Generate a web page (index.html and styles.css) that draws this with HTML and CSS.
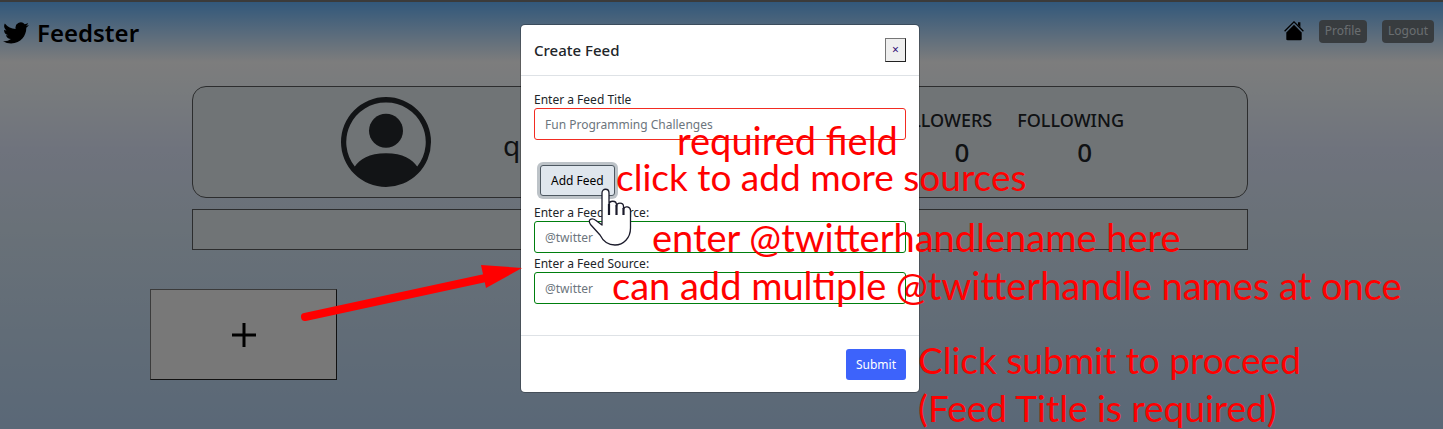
FILE: index.html
```html
<!DOCTYPE html>
<html lang="en">
<head>
<meta charset="utf-8">
<title>Feedster</title>
<link rel="stylesheet" href="styles.css">
</head>
<body>
<div class="page">
  <header class="topbar">
    <a class="brand" href="#">
      <svg class="brand-icon" viewBox="0 0 24 24" aria-hidden="true"><path d="M23.9 4.6a10 10 0 0 1-2.8.8 5 5 0 0 0 2.1-2.7c-1 .6-2 1-3.1 1.2a4.9 4.9 0 0 0-8.4 4.5A14 14 0 0 1 1.7 3.2a4.9 4.9 0 0 0 1.5 6.5 4.9 4.9 0 0 1-2.2-.6v.1a4.9 4.9 0 0 0 3.9 4.8 5 5 0 0 1-2.2.1 4.9 4.9 0 0 0 4.6 3.4A9.9 9.9 0 0 1 0 19.500a14 14 0 0 0 7.500 2.200c9.100 0 14-7.500 14-14v-.6a10 10 0 0 0 2.400-2.500z"/></svg>
      Feedster
    </a>
    <nav class="nav">
      <a class="home" href="#" aria-label="Home"><svg viewBox="0 0 20 20" aria-hidden="true"><path d="M10 3.800 2.300 11.500V18c0 .8.400 1.200 1.200 1.200h13c.8 0 1.200-.4 1.200-1.200v-6.500z"/><path d="M.6 10.200 10 .9l9.400 9.300" fill="none" stroke="#000" stroke-width="1.300"/><path d="M14 1.300h2.400v5L14 4z"/></svg></a>
      <button class="nav-btn" type="button">Profile</button>
      <button class="nav-btn" type="button">Logout</button>
    </nav>
  </header>
  <main class="main">
    <section class="profile">
      <svg class="avatar" viewBox="0 0 90 90" aria-hidden="true"><path fill-rule="evenodd" d="M45 0a45 45 0 1 0 0 90 45 45 0 0 0 0-90zM45 5.600a39.400 39.400 0 0 1 31.200 63.900C71.500 62.500 62 56.200 45 56.200S18.500 62.500 13.800 69.500A39.400 39.400 0 0 1 45 5.600z"/><circle cx="45" cy="33.800" r="17"/></svg>
      <span class="username">q</span>
      <dl class="stats">
        <div class="stat"><dt>FOLLOWERS</dt><dd>0</dd></div>
        <div class="stat"><dt>FOLLOWING</dt><dd>0</dd></div>
      </dl>
    </section>
    <div class="strip"></div>
  </main>
  <button class="tile" type="button" aria-label="New feed"><svg viewBox="0 0 24 24" aria-hidden="true"><path d="M12 0v24M0 12h24" stroke="#000" stroke-width="3"/></svg></button>
</div>

<div class="backdrop">
  <form class="modal" role="dialog" aria-labelledby="modal-title">
    <header class="modal-head">
      <h1 id="modal-title">Create Feed</h1>
      <button class="close" type="button" aria-label="Close">×</button>
    </header>
    <div class="modal-body">
      <label for="title">Enter a Feed Title</label>
      <input class="field field-required" id="title" type="text" placeholder="Fun Programming Challenges">
      <button class="add" type="button">Add Feed</button>
      <label for="source1">Enter a Feed Source:</label>
      <input class="field" id="source1" type="text" placeholder="@twitter">
      <label for="source2">Enter a Feed Source:</label>
      <input class="field" id="source2" type="text" placeholder="@twitter">
    </div>
    <footer class="modal-foot"><button class="submit" type="submit">Submit</button></footer>

    <svg class="pointer" viewBox="0 0 44 58" aria-hidden="true"><path d="M14 37V5c0-5 7-5 7 0v12c0-5 7.500-5 7.500 0v1.500c0-4.500 7-4.500 7 0V21c1-3.500 7-2.500 7 1.500V40c0 10-7 17-15.500 17-7 0-12-4-15-10L2.500 36.500C-1 31 4 29.500 8 32.500z" fill="#fff" stroke="#1b1b2b" stroke-width="1.300" stroke-linejoin="round"/><path d="M21 16v11M28.500 17v10M35.500 20v7" stroke="#1b1b2b" stroke-width="2.200"/></svg>
    <svg class="arrow" viewBox="0 0 222 60" aria-hidden="true"><path d="M5 54 190 14" stroke="red" stroke-width="8" stroke-linecap="round"/><path d="m181 2 41 3-36 20z" fill="red"/></svg>
    <p class="note note-required">required field</p>
    <p class="note note-add">click to add more sources</p>
    <p class="note note-handle">enter @twitterhandlename here</p>
    <p class="note note-multiple">can add multiple @twitterhandle names at once</p>
    <p class="note note-submit">Click submit to proceed<br>(Feed Title is required)</p>
  </form>
</div>
</body>
</html>
```
FILE: styles.css
```css
* { box-sizing: border-box; }
html { height: 100%; overflow: hidden; }
body {
  margin: 0;
  min-height: 100%;
  font: 12px/18px "Noto Sans", "Open Sans", sans-serif;
  color: #212529;
  position: relative;
}
button, input { font: inherit; color: inherit; }
h1, p, dl, dd { margin: 0; }

.page {
  min-height: 100vh;
  padding-right: 3px;
  border-top: 2px solid #777;
  background: linear-gradient(#64b0f6 0, #fafafa 60px, #f0f6fa 90px, #dee6fa 150px, #d2e2f0 230px, #b4d0ee 427px);
}
.topbar { display: flex; align-items: center; justify-content: space-between; height: 62px; padding: 0 6px 0 3px; }
.brand { display: flex; align-items: center; gap: 8px; color: #000; font-size: 24px; font-weight: 600; line-height: 32px; text-decoration: none; }
.brand-icon { width: 26px; height: 26px; }
.nav { display: flex; align-items: center; gap: 15px; padding-bottom: 4px; }
.home, .home svg { display: block; width: 20px; height: 20px; }
.nav-btn { height: 23px; padding: 0 6px; border: 0; border-radius: 4px; background: #70787e; color: #d4dce0; }

.main { display: flex; flex-direction: column; gap: 11px; width: 74%; max-width: 1056px; margin: 22px auto 0; }
.profile { display: flex; align-items: center; height: 112px; padding: 0 123px 0 148px; border: 1px solid #585a5c; border-radius: 14px; background: #e0e8ec; }
.avatar { width: 90px; height: 90px; fill: #25282c; }
.username { margin-left: 72px; padding-top: 6px; font-size: 28px; line-height: 40px; }
.stats { display: flex; gap: 25px; margin: 0 0 8px auto; font-weight: 500; text-align: center; }
.stat { font-size: 18px; line-height: 28px; }
.stat dd { padding-left: 28px; font-size: 26px; line-height: 36px; }
.stat:first-child dd { padding-left: 44px; }
.strip { height: 41px; border: 1px solid #585a5c; background: #e0e8ec; }
.tile { display: grid; place-items: center; width: 187px; height: 91px; margin: 39px 0 0 150px; border: 1px solid #222; border-top-color: #767676; border-left-color: #767676; background: #f0f0f0; }
.tile svg { width: 24px; height: 24px; }

.backdrop { position: absolute; inset: 0; padding: 25px 3px 0 0; background: rgba(0, 0, 0, .5); }
.modal { position: relative; width: 398px; margin: 0 auto; border-radius: 4px; background: #fff; box-shadow: 0 0 0 1px rgba(0, 0, 0, .25); }
.modal-head { display: flex; align-items: center; justify-content: space-between; height: 51px; padding: 0 13px; border-bottom: 1px solid #dee2e6; }
.modal-head h1 { font-size: 15px; font-weight: 500; line-height: 22px; }
.close { width: 21px; height: 24px; padding: 0; border: 1px solid #222; border-top-color: #767676; border-left-color: #767676; background: #efefef; color: #317; }
.modal-body { display: flex; flex-direction: column; padding: 16px 13px 31px; line-height: 16px; }
.field { height: 32px; margin-bottom: 3px; padding: 0 10px; border: 1px solid #007f0e; border-radius: 3px; background: #fff; outline: 0; }
.field::placeholder { color: #6c757d; opacity: 1; }
.field-required { border-color: #f22c22; }
.field:last-child { margin-bottom: 0; }
.add { align-self: flex-start; height: 31px; margin: 22px 6px 9px; padding: 0 10px; border: 1px solid #4d5861; border-radius: 3px; background: #dfe6ed; box-shadow: 0 0 0 3px #bdc3c8; color: #000; }
.modal-foot { display: flex; justify-content: flex-end; padding: 13px 13px 12px; border-top: 1px solid #dee2e6; }
.submit { height: 31px; padding: 0 10px; border: 0; border-radius: 3px; background: #3d63fb; color: #fff; }

.pointer { position: absolute; left: 67px; top: 163px; width: 44px; height: 58px; }
.arrow { position: absolute; left: -221px; top: 238px; width: 222px; height: 60px; }
.note { position: absolute; color: red; font: 38px/48px Lato, "Open Sans", sans-serif; white-space: nowrap; }
.note-required { left: 156px; top: 91px; }
.note-add { left: 95px; top: 128px; font-size: 37px; }
.note-handle { left: 131px; top: 188px; }
.note-multiple { left: 91px; top: 236px; }
.note-submit { left: 397px; top: 311px; font-size: 37px; }
```
